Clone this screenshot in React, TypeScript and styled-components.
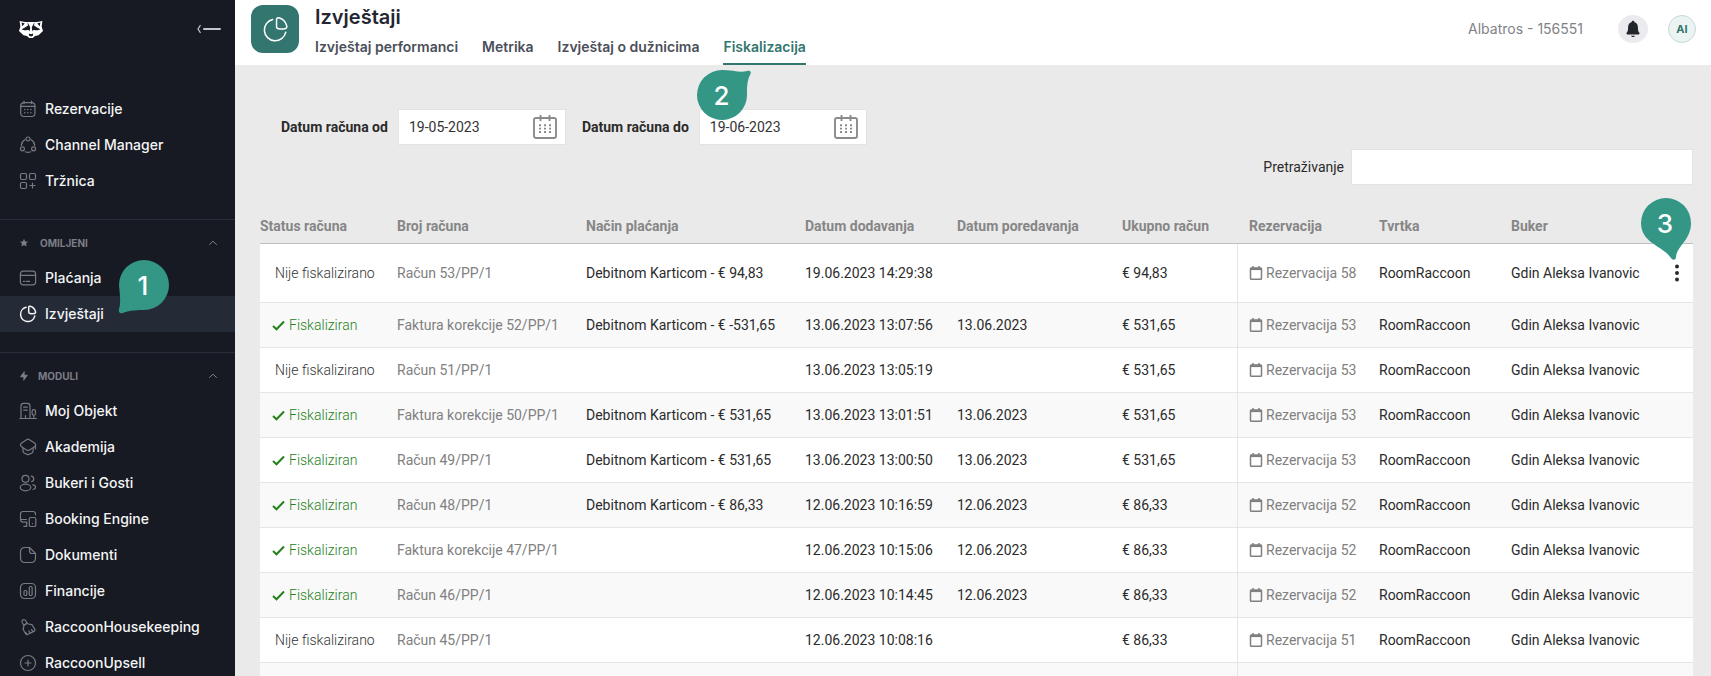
import React from "react";
import styled, { createGlobalStyle, css } from "styled-components";

const GlobalStyle = createGlobalStyle`
  *, *::before, *::after { box-sizing: border-box; }
  body { margin: 0; background: #eaeaea; font-family: Roboto, "Liberation Sans", sans-serif; }
  button { font: inherit; border: 0; padding: 0; background: none; cursor: pointer; }
  a { color: inherit; text-decoration: none; }
`;

const inter = `Inter, "Liberation Sans", sans-serif`;

/* ---------- shell ---------- */

const Shell = styled.div`
  display: flex;
  height: 100vh;
  overflow: hidden;
`;

const Sidebar = styled.aside`
  flex: 0 0 235px;
  overflow: hidden;
  background: #171a23;
  color: #f4f5f6;
  font-family: ${inter};
`;

const Brand = styled.div`
  display: flex;
  align-items: center;
  justify-content: space-between;
  height: 58px;
  margin-bottom: 33px;
  padding: 0 14px 0 19px;
`;

const IconButton = styled.button`
  display: flex;
  color: #c4c6ca;
`;

const NavGroup = styled.section`
  padding-bottom: 20px;
  & + & { border-top: 1px solid #2a2e3b; }
`;

const GroupToggle = styled.button`
  display: flex;
  align-items: center;
  width: 100%;
  height: 40px;
  padding: 5px 17px 0 19px;
  color: #7b7e86;
  font-size: 10px;
  font-weight: 700;
  line-height: 12px;
`;

const GroupName = styled.span<{ $gap: number }>`
  flex: 1;
  margin-left: ${(p) => p.$gap}px;
  text-align: left;
`;

const NavList = styled.ul`
  margin: 0;
  padding: 0;
  list-style: none;
`;

const NavItem = styled.li`
  position: relative;
`;

const NavLink = styled.a<{ $active?: boolean }>`
  display: flex;
  align-items: center;
  gap: 8px;
  height: 36px;
  padding-left: 19px;
  font-size: 14px;
  font-weight: 500;
  line-height: 20px;
  white-space: nowrap;
  background: ${(p) => (p.$active ? "#242b37" : "transparent")};
  svg { color: ${(p) => (p.$active ? "#f4f5f6" : "#777a82")}; }
`;

const Main = styled.main`
  flex: 1;
  min-width: 0;
  overflow: auto;
  scrollbar-width: none;
`;

/* ---------- page header ---------- */

const Header = styled.header`
  display: flex;
  justify-content: space-between;
  height: 65px;
  padding: 0 15px 0 16px;
  background: #fff;
  font-family: ${inter};
`;

const HeaderLead = styled.div`
  display: flex;
  gap: 16px;
`;

const PageBadge = styled.div`
  display: flex;
  align-items: center;
  justify-content: center;
  width: 48px;
  height: 48px;
  margin-top: 5px;
  border-radius: 12px;
  background: #33766f;
  color: #fff;
`;

const TitleBlock = styled.div`
  display: flex;
  flex-direction: column;
  justify-content: space-between;
`;

const Title = styled.h1`
  margin: 4px 0 0;
  color: #242731;
  font-size: 20px;
  font-weight: 600;
  line-height: 26px;
`;

const Tabs = styled.nav`
  display: flex;
  gap: 24px;
`;

const TabSlot = styled.div`
  position: relative;
`;

const Tab = styled.a<{ $active?: boolean }>`
  display: block;
  height: 29px;
  border-bottom: 2px solid ${(p) => (p.$active ? "#33766f" : "transparent")};
  color: ${(p) => (p.$active ? "#33766f" : "#4b4f59")};
  font-size: 14px;
  font-weight: 600;
  line-height: 22px;
  white-space: nowrap;
`;

const HeaderTools = styled.div`
  display: flex;
  align-items: center;
  height: 58px;
`;

const Property = styled.span`
  margin-right: 35px;
  color: #808288;
  font-size: 14px;
  line-height: 20px;
`;

const BellButton = styled.button`
  display: flex;
  align-items: center;
  justify-content: center;
  width: 30px;
  height: 28px;
  margin-right: 20px;
  border-radius: 50%;
  background: #ebebef;
  color: #22262b;
`;

const Avatar = styled.button`
  width: 28px;
  height: 28px;
  border: 1px solid #c3dbd7;
  border-radius: 50%;
  background: #ecf4f3;
  color: #33766f;
  font-size: 11px;
  font-weight: 700;
`;

/* ---------- filters ---------- */

const Content = styled.div`
  padding: 44px 18px 0 25px;
  color: #2b2b2b;
  font-size: 14px;
  line-height: 20px;
`;

const DateFilters = styled.div`
  display: flex;
  gap: 16px;
  padding-left: 21px;
`;

const Field = styled.div<{ $gap: number }>`
  display: flex;
  align-items: center;
  gap: ${(p) => p.$gap}px;
`;

const DateLabel = styled.label`
  font-weight: 700;
`;

const boxed = css`
  height: 36px;
  border: 1px solid #e3e3e3;
  background: #fff;
`;

const DateBox = styled.div`
  ${boxed}
  display: flex;
  align-items: center;
  justify-content: space-between;
  width: 168px;
  padding: 0 8px 0 10px;
`;

const DateInput = styled.input`
  width: 100px;
  border: 0;
  padding: 0;
  background: none;
  color: #333;
  font: 14px/20px Roboto, "Liberation Sans", sans-serif;
  outline: 0;
`;

const CalendarButton = styled.button`
  display: flex;
  color: #8b8b8b;
`;

const SearchRow = styled.div`
  display: flex;
  justify-content: flex-end;
  margin-top: 4px;
`;

const SearchInput = styled.input`
  ${boxed}
  width: 342px;
  padding: 0 11px;
  font: inherit;
  outline: 0;
`;

/* ---------- table ---------- */

const Table = styled.table`
  width: 100%;
  margin-top: 24px;
  border-collapse: separate;
  border-spacing: 0;
  table-layout: fixed;
  white-space: nowrap;
`;

const Th = styled.th<{ $indent?: boolean }>`
  height: 35px;
  padding: 0 0 0 ${(p) => (p.$indent ? 12 : 0)}px;
  border-bottom: 1px solid #c0c0c0;
  color: #868686;
  font-weight: 700;
  text-align: left;
`;

const Td = styled.td<{ $divided?: boolean; $muted?: boolean }>`
  padding: 0 0 0 ${(p) => (p.$divided ? 11 : 0)}px;
  border-bottom: 1px solid #e5e5e5;
  border-left: ${(p) => (p.$divided ? "1px solid #e5e5e5" : "0")};
  color: ${(p) => (p.$muted ? "#808080" : "#2b2b2b")};
`;

const Row = styled.tr<{ $tall?: boolean }>`
  height: ${(p) => (p.$tall ? 59 : 45)}px;
  background: #fff;
  &:nth-child(even) { background: #f9f9f9; }
`;

const Status = styled.span<{ $done?: boolean }>`
  display: flex;
  align-items: center;
  gap: 4px;
  padding-left: ${(p) => (p.$done ? 12 : 15)}px;
  color: ${(p) => (p.$done ? "#25811c" : "#333")};
  font-weight: 300;
`;

const ReservationLink = styled.a`
  display: flex;
  align-items: center;
  gap: 3px;
`;

const ActionCell = styled.div`
  position: relative;
  display: flex;
  justify-content: center;
`;

const MoreButton = styled.button`
  display: flex;
  color: #2b2b2b;
`;

/* ---------- step markers ---------- */

const PinBox = styled.span<{ $left: number; $top: number }>`
  position: absolute;
  z-index: 2;
  left: ${(p) => p.$left}px;
  top: ${(p) => p.$top}px;
  display: flex;
  align-items: center;
  justify-content: center;
  width: 50px;
  height: 50px;
  padding: 2px 2px 0 0;
  color: #fff;
  font: 500 26px/32px ${inter};
  pointer-events: none;
  svg { position: absolute; left: 0; top: 0; overflow: visible; }
  b { position: relative; font-weight: 500; }
`;

const pinShapes = {
  "bottom-left":
    "M25 0A25 25 0 0 1 25 50C14 50 8 51 4 53C1 54-1 52 0 49C2 44 1 36 0 25A25 25 0 0 1 25 0Z",
  "top-right":
    "M25 0C36 0 43 3 50 1C53 0 55 2 53 5C50 11 50 17 50 25A25 25 0 1 1 25 0Z",
  bottom:
    "M25 0A25 25 0 0 1 50 25C50 42 36 48 35 59C35 62 32 63 30 60C22 48 0 45 0 25A25 25 0 0 1 25 0Z",
};

function Pin({ n, shape, left, top }: { n: number; shape: keyof typeof pinShapes; left: number; top: number }) {
  return (
    <PinBox $left={left} $top={top}>
      <svg width="50" height="50" viewBox="0 0 50 50" fill="#349684" aria-hidden="true">
        <path d={pinShapes[shape]} />
      </svg>
      <b>{n}</b>
    </PinBox>
  );
}

/* ---------- icons ---------- */

function Line({ size = 18, stroke = 1.4, children }: { size?: number; stroke?: number; children: React.ReactNode }) {
  return (
    <svg width={size} height={size} viewBox="0 0 18 18" fill="none" stroke="currentColor" strokeWidth={stroke} strokeLinecap="round" strokeLinejoin="round" aria-hidden="true">
      {children}
    </svg>
  );
}

const glyphs: Record<string, React.ReactNode> = {
  calendar: (
    <>
      <rect x="1.7" y="2.6" width="14.2" height="13.9" rx="3.2" />
      <path d="M1.7 6.4h14.2M5 1.2v2.4M12.6 1.2v2.4" />
      <path d="M5.7 9.6h.01M8.8 9.6h.01M11.9 9.6h.01M5.7 12.7h.01M8.8 12.7h.01M11.9 12.7h.01" strokeWidth="1.5" />
    </>
  ),
  channel: (
    <>
      <circle cx="9" cy="3" r="2" />
      <circle cx="3.4" cy="12.8" r="2" />
      <circle cx="14.6" cy="12.8" r="2" />
      <path d="M5.8 3.8A6.9 6.9 0 0 0 2.3 9.4M12.2 3.8a6.9 6.9 0 0 1 3.5 5.6M6.3 15.8a7 7 0 0 0 5.4 0" />
    </>
  ),
  market: (
    <>
      <rect x="1.5" y="1.5" width="6" height="6" rx="1.2" />
      <rect x="10.5" y="1.5" width="6" height="6" rx="1.2" />
      <rect x="1.5" y="10.5" width="6" height="6" rx="1.2" />
      <path d="M13.5 11v5M11 13.5h5" />
    </>
  ),
  card: (
    <>
      <rect x="1.4" y="2.2" width="15.2" height="13.6" rx="2.8" />
      <path d="M1.4 6.3h15.2M4.4 12.4h1.2M7.4 12.4h3.2" />
    </>
  ),
  pie: (
    <>
      <path d="M7.1 2.3A7.2 7.2 0 1 0 15.8 10.9" />
      <path d="M9.7 2.4c0-.9.6-1.4 1.4-1.2 2.6.6 4.6 2.5 5.4 5.3.3.9-.2 1.9-1.2 2-1.4.2-3 .2-4.3 0-.8-.1-1.3-.7-1.3-1.5Z" />
    </>
  ),
  building: (
    <>
      <path d="M.8 16.5h16.6M2 16.5V4c0-1.7.8-2.6 2.5-2.6h4c1.7 0 2.5.9 2.5 2.6v12.5M4.7 5.2h3.6M4.7 8.2h3.6M6.5 16.5v-3" />
      <path d="M14.8 16.5v-3.2M14.8 7.7c1 0 1.7.8 1.7 1.7v2c0 1-.7 1.8-1.7 1.8s-1.7-.8-1.7-1.8v-2c0-.9.7-1.7 1.7-1.7Z" />
    </>
  ),
  academy: (
    <>
      <path d="M7.6 1.7 2.6 5c-1.5 1-1.5 2.8 0 3.8l4.9 3.1c1 .6 2.2.6 3.1 0l4.9-3.1c1.5-1 1.5-2.8 0-3.8l-5-3.3c-.9-.6-2-.6-2.9 0Z" />
      <path d="M4 10.3v2.6c0 1 .7 2 1.6 2.4l2.6 1.1c.5.2 1.2.2 1.7 0l2.6-1.1c.9-.4 1.6-1.4 1.6-2.4v-2.6M16.5 11V7.6" />
    </>
  ),
  people: (
    <>
      <circle cx="6.5" cy="4.8" r="3.5" />
      <ellipse cx="6.5" cy="13.5" rx="5.3" ry="3.3" />
      <path d="M12.3 2.2a2.8 2.8 0 0 1 .3 5.5M13.8 10.9c3.5.4 3.7 3.8.3 4.6" />
    </>
  ),
  devices: (
    <>
      <path d="M16.5 4.8V4c0-1.6-.9-2.5-2.6-2.5H4C2.3 1.5 1.5 2.4 1.5 4v5.6c0 1.7.8 2.5 2.5 2.5h3.7v3.8M1.5 9.5h6M4.8 16.3h3" />
      <rect x="10.3" y="7.5" width="6.5" height="9" rx="1.6" />
      <path d="M13.5 13.7h.01" />
    </>
  ),
  document: (
    <>
      <path d="M16.5 7.5V12c0 3-1.5 4.5-4.5 4.5H6c-3 0-4.5-1.5-4.5-4.5V6c0-3 1.5-4.5 4.5-4.5h4.5Z" />
      <path d="M10.5 1.5V5c0 1.8.7 2.5 2.5 2.5h3.5" />
    </>
  ),
  finance: (
    <>
      <rect x="1.5" y="1.5" width="15" height="15" rx="4" />
      <rect x="5" y="8.5" width="2.8" height="5" rx="1.1" />
      <rect x="10.3" y="4.5" width="2.8" height="9" rx="1.1" />
    </>
  ),
  broom: (
    <>
      <path d="M3.7 2c1.1-.7 2.4-.3 3 .8l1.4 2.5-3.3 1.9-1.5-2.5C2.7 3.7 3 2.5 3.7 2Z" />
      <path d="M4.8 7.2 8.1 5.3l1.3.7 3.7.7 2.7 4.7c.4.8.2 1.3-.5 1.7L8.5 16.5c-.7.4-1.3.2-1.7-.5L4 11.3l.8-2.6ZM7.9 16.5l-1.1-2M11 14.9l-1.1-1.9M13.6 13.4l-1-1.8" />
    </>
  ),
  plus: (
    <>
      <circle cx="9" cy="9" r="7.5" />
      <path d="M9 6v6M6 9h6" />
    </>
  ),
};

const Raccoon = () => (
  <svg width="24" height="17" viewBox="0 0 24 17" aria-hidden="true">
    <path fill="#fff" d="M.6 0 6 .9h12L23.400 0l-.8 5.500L24 10l-4.500 4.200L16 15l-2.200 2h-3.600L8 15l-3.500-.8L0 10l1.400-4.500Z" />
    <path fill="#171a23" d="m2.600 1.600 3.200.8L3.200 5.200Zm18.800 0-3.200.8 2.600 2.800ZM8.400 1l2.400 4.600L12 8l1.200-2.400L15.600 1l-.6 3.600 3 1.800 3.400 1.800c-1.800 1.200-3.600 1.200-5.300 1-1.300-.3-2.200.1-3 1.300h-2.200c-.8-1.200-1.700-1.600-3-1.300-1.700.2-3.500.2-5.300-1L6 6.400l3-1.800ZM9.800 12.400l2.200.8 2.200-.8-.3 2.300L12 15.600l-1.900-.9Z" />
    <path fill="#fff" d="m12 5.200.9 2.200.6 4-1.500 1.400-1.500-1.400.6-4Z" />
  </svg>
);

const Collapse = () => (
  <svg width="24" height="10" viewBox="0 0 24 10" fill="none" stroke="currentColor" strokeLinecap="round" aria-hidden="true">
    <path d="M3.2 1.5 1 5l2.2 3.5" strokeWidth="1.3" strokeLinejoin="round" />
    <path d="M7 5h16" strokeWidth="2" />
  </svg>
);

const Caret = () => (
  <svg width="10" height="6" viewBox="0 0 10 6" fill="none" stroke="currentColor" strokeLinecap="round" strokeLinejoin="round" aria-hidden="true">
    <path d="M1.5 4.5 5 1.2l3.5 3.3" />
  </svg>
);

const Star = () => (
  <svg width="10" height="10" viewBox="0 0 10 10" fill="currentColor" aria-hidden="true">
    <path d="m5 .8 1.2 2.6 2.9.3L7 5.6l.6 2.9L5 7.100 2.400 8.500 3 5.600.9 3.700l2.900-.3Z" />
  </svg>
);

const Bolt = () => (
  <svg width="10" height="12" viewBox="0 0 10 12" fill="currentColor" aria-hidden="true">
    <path d="M5.600.7v4h2.500c.6 0 .8.500.5.900L4.400 11.300V7.200H1.900c-.6 0-.8-.5-.5-.9Z" />
  </svg>
);

const Bell = () => (
  <svg width="14" height="18" viewBox="0 0 14 18" fill="currentColor" aria-hidden="true">
    <path d="M7 .8c.8 0 1.300.5 1.300 1.200 2.100.6 3.600 2.500 3.600 4.900 0 3.200.3 4.500 1.300 5.700.7.900.3 2-.8 2H1.600c-1.100 0-1.500-1.100-.8-2 1-1.200 1.300-2.500 1.300-5.700 0-2.400 1.500-4.300 3.600-4.900C5.700 1.300 6.200.8 7 .8ZM5 15.800h4c-.3.800-1 1.300-2 1.300s-1.700-.5-2-1.300Z" />
  </svg>
);

const BigCalendar = () => (
  <svg width="24" height="24" viewBox="0 0 24 24" fill="none" stroke="currentColor" strokeWidth="1.9" aria-hidden="true">
    <rect x="1" y="3" width="22" height="20" rx="2" />
    <path d="M7.500 0v6M16.500 0v6" />
    <path d="M6 10.200h12M6 13.600h12M6 17h12" strokeDasharray="2 3" />
  </svg>
);

const Check = () => (
  <svg width="13" height="11" viewBox="0 0 13 11" fill="none" stroke="currentColor" strokeWidth="2" aria-hidden="true">
    <path d="m1 6 3.500 3.300L12 1.500" />
  </svg>
);

const SmallCalendar = () => (
  <svg width="14" height="16" viewBox="0 0 14 16" fill="none" stroke="currentColor" strokeWidth="1.5" aria-hidden="true">
    <rect x="1.500" y="3" width="11" height="11.200" rx=".8" />
    <path d="M1.500 4h11" strokeWidth="2.2" />
    <path d="M4 1v3M10 1v3" />
  </svg>
);

const Dots = () => (
  <svg width="6" height="18" viewBox="0 0 6 18" fill="currentColor" aria-hidden="true">
    <circle cx="3" cy="2.5" r="2" />
    <circle cx="3" cy="9" r="2" />
    <circle cx="3" cy="15.5" r="2" />
  </svg>
);

/* ---------- data ---------- */

type NavEntry = { icon: string; label: string; active?: boolean };

const topNav: NavEntry[] = [
  { icon: "calendar", label: "Rezervacije" },
  { icon: "channel", label: "Channel Manager" },
  { icon: "market", label: "Tržnica" },
];
const favourites: NavEntry[] = [
  { icon: "card", label: "Plaćanja" },
  { icon: "pie", label: "Izvještaji", active: true },
];
const modules: NavEntry[] = [
  { icon: "building", label: "Moj Objekt" },
  { icon: "academy", label: "Akademija" },
  { icon: "people", label: "Bukeri i Gosti" },
  { icon: "devices", label: "Booking Engine" },
  { icon: "document", label: "Dokumenti" },
  { icon: "finance", label: "Financije" },
  { icon: "broom", label: "RaccoonHousekeeping" },
  { icon: "plus", label: "RaccoonUpsell" },
];

const tabs = ["Izvještaj performanci", "Metrika", "Izvještaj o dužnicima", "Fiskalizacija"];

const columns = [
  { name: "Status računa", width: 137 },
  { name: "Broj računa", width: 189 },
  { name: "Način plaćanja", width: 219 },
  { name: "Datum dodavanja", width: 152 },
  { name: "Datum poredavanja", width: 165 },
  { name: "Ukupno račun", width: 115 },
  { name: "Rezervacija", width: 142, indent: true },
  { name: "Tvrtka", width: 132 },
  { name: "Buker", width: 149 },
  { name: "", width: 33 },
];

type Invoice = { done: boolean; number: string; payment: string; added: string; ordered: string; total: string; reservation: number };

const inv = (done: boolean, number: string, payment: string, added: string, ordered: string, total: string, reservation: number): Invoice => ({
  done, number, payment, added, ordered, total, reservation,
});

const invoices: Invoice[] = [
  inv(false, "Račun 53/PP/1", "Debitnom Karticom - € 94,83", "19.06.2023 14:29:38", "", "€ 94,83", 58),
  inv(true, "Faktura korekcije 52/PP/1", "Debitnom Karticom - € -531,65", "13.06.2023 13:07:56", "13.06.2023", "€ 531,65", 53),
  inv(false, "Račun 51/PP/1", "", "13.06.2023 13:05:19", "", "€ 531,65", 53),
  inv(true, "Faktura korekcije 50/PP/1", "Debitnom Karticom - € 531,65", "13.06.2023 13:01:51", "13.06.2023", "€ 531,65", 53),
  inv(true, "Račun 49/PP/1", "Debitnom Karticom - € 531,65", "13.06.2023 13:00:50", "13.06.2023", "€ 531,65", 53),
  inv(true, "Račun 48/PP/1", "Debitnom Karticom - € 86,33", "12.06.2023 10:16:59", "12.06.2023", "€ 86,33", 52),
  inv(true, "Faktura korekcije 47/PP/1", "", "12.06.2023 10:15:06", "12.06.2023", "€ 86,33", 52),
  inv(true, "Račun 46/PP/1", "", "12.06.2023 10:14:45", "12.06.2023", "€ 86,33", 52),
  inv(false, "Račun 45/PP/1", "", "12.06.2023 10:08:16", "", "€ 86,33", 51),
];

/* ---------- parts ---------- */

function NavItems({ items }: { items: NavEntry[] }) {
  return (
    <NavList>
      {items.map((item) => (
        <NavItem key={item.label}>
          <NavLink href="#" $active={item.active} aria-current={item.active ? "page" : undefined}>
            <Line stroke={item.active ? 1.5 : 1.2}>{glyphs[item.icon]}</Line>
            {item.label}
          </NavLink>
          {item.active && <Pin n={1} shape="bottom-left" left={119} top={-36} />}
        </NavItem>
      ))}
    </NavList>
  );
}

function DateField({ id, label, value }: { id: string; label: string; value: string }) {
  return (
    <Field $gap={10}>
      <DateLabel htmlFor={id}>{label}</DateLabel>
      <DateBox>
        <DateInput id={id} defaultValue={value} />
        <CalendarButton type="button" aria-label={label}>
          <BigCalendar />
        </CalendarButton>
      </DateBox>
    </Field>
  );
}

function InvoiceRow({ invoice, first }: { invoice: Invoice; first: boolean }) {
  return (
    <Row $tall={first}>
      <Td>
        <Status $done={invoice.done}>
          {invoice.done && <Check />}
          {invoice.done ? "Fiskaliziran" : "Nije fiskalizirano"}
        </Status>
      </Td>
      <Td $muted><a href="#">{invoice.number}</a></Td>
      <Td>{invoice.payment}</Td>
      <Td>{invoice.added}</Td>
      <Td>{invoice.ordered}</Td>
      <Td>{invoice.total}</Td>
      <Td $divided $muted>
        <ReservationLink href="#">
          <SmallCalendar />
          Rezervacija {invoice.reservation}
        </ReservationLink>
      </Td>
      <Td>RoomRaccoon</Td>
      <Td>Gdin Aleksa Ivanovic</Td>
      <Td>
        {first && (
          <ActionCell>
            <MoreButton type="button" aria-label="Više"><Dots /></MoreButton>
            <Pin n={3} shape="bottom" left={-19} top={-66} />
          </ActionCell>
        )}
      </Td>
    </Row>
  );
}

export default function App() {
  return (
    <>
      <GlobalStyle />
      <Shell>
        <Sidebar>
          <Brand>
            <Raccoon />
            <IconButton type="button" aria-label="Sažmi izbornik"><Collapse /></IconButton>
          </Brand>
          <NavGroup>
            <NavItems items={topNav} />
          </NavGroup>
          <NavGroup>
            <GroupToggle type="button"><Star /><GroupName $gap={11}>OMILJENI</GroupName><Caret /></GroupToggle>
            <NavItems items={favourites} />
          </NavGroup>
          <NavGroup>
            <GroupToggle type="button"><Bolt /><GroupName $gap={9}>MODULI</GroupName><Caret /></GroupToggle>
            <NavItems items={modules} />
          </NavGroup>
        </Sidebar>
        <Main>
          <Header>
            <HeaderLead>
              <PageBadge><Line size={27} stroke={1}>{glyphs.pie}</Line></PageBadge>
              <TitleBlock>
                <Title>Izvještaji</Title>
                <Tabs>
                  {tabs.map((tab, i) => (
                    <TabSlot key={tab}>
                      <Tab href="#" $active={i === 3}>{tab}</Tab>
                      {i === 3 && <Pin n={2} shape="top-right" left={-26} top={34} />}
                    </TabSlot>
                  ))}
                </Tabs>
              </TitleBlock>
            </HeaderLead>
            <HeaderTools>
              <Property>Albatros - 156551</Property>
              <BellButton type="button" aria-label="Obavijesti"><Bell /></BellButton>
              <Avatar type="button">AI</Avatar>
            </HeaderTools>
          </Header>
          <Content>
            <DateFilters>
              <DateField id="date-from" label="Datum računa od" value="19-05-2023" />
              <DateField id="date-to" label="Datum računa do" value="19-06-2023" />
            </DateFilters>
            <SearchRow>
              <Field $gap={7}>
                <label htmlFor="search">Pretraživanje</label>
                <SearchInput id="search" type="search" />
              </Field>
            </SearchRow>
            <Table>
              <colgroup>
                {columns.map((c) => <col key={c.name} style={{ width: c.width }} />)}
              </colgroup>
              <thead>
                <tr>
                  {columns.map((c) => <Th key={c.name} $indent={c.indent}>{c.name}</Th>)}
                </tr>
              </thead>
              <tbody>
                {invoices.map((invoice, i) => <InvoiceRow key={invoice.number} invoice={invoice} first={i === 0} />)}
                <Row>
                  {columns.map((c) => <Td key={c.name} $divided={c.indent} />)}
                </Row>
              </tbody>
            </Table>
          </Content>
        </Main>
      </Shell>
    </>
  );
}
